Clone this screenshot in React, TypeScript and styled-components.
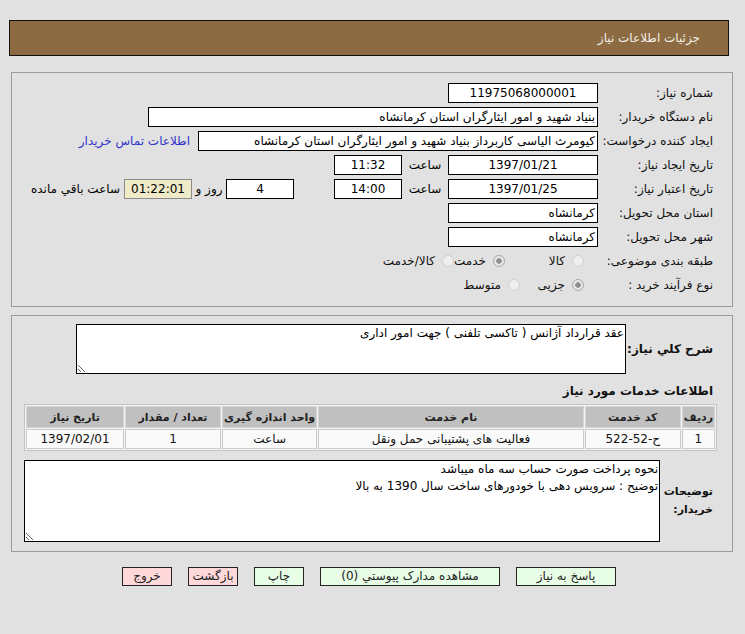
import styled, { createGlobalStyle } from "styled-components";

const GlobalStyle = createGlobalStyle`
  body {
    margin: 0;
    background: #e1e1e1;
    font-family: "DejaVu Sans", sans-serif;
    font-size: 12px;
    color: #000;
    direction: rtl;
  }
`;

const Page = styled.div`
  width: 745px;
  padding-top: 20px;
  direction: rtl;
`;

const TitleBar = styled.div`
  box-sizing: border-box;
  width: 720px;
  height: 36px;
  margin-right: 16px;
  background: #8c6b42;
  border: 1px solid #111;
  color: #f4efe6;
  font-size: 12px;
  display: flex;
  align-items: center;
  padding-right: 28px;
`;

const Panel = styled.div<{ $gap?: number }>`
  box-sizing: border-box;
  width: 722px;
  margin-right: 12px;
  margin-top: ${(p) => p.$gap ?? 8}px;
  border: 1px solid #9a9a9a;
  background: #e1e1e1;
`;

const FormGrid = styled.div`
  display: grid;
  grid-template-columns: 113px 1fr;
  column-gap: 2px;
  row-gap: 4px;
  padding: 10px 19px 11px 10px;
`;

const Label = styled.div`
  height: 20px;
  line-height: 20px;
  white-space: nowrap;
  font-size: 12px;
  color: #111;
`;

const Line = styled.div`
  display: flex;
  align-items: center;
  height: 20px;
`;

const Field = styled.div<{ $width: number; $center?: boolean; $bg?: string }>`
  box-sizing: border-box;
  width: ${(p) => p.$width}px;
  height: 20px;
  line-height: 18px;
  border: 1px solid ${(p) => (p.$bg ? "#8a8a8a" : "#000")};
  background: ${(p) => p.$bg ?? "#fff"};
  padding: 0 2px;
  text-align: ${(p) => (p.$center ? "center" : "right")};
  white-space: nowrap;
  overflow: hidden;
  font-size: 12px;
  flex: none;
`;

const Note = styled.span<{ $width?: number; $gap?: number }>`
  ${(p) => (p.$width ? `width: ${p.$width}px; text-align: center;` : "")}
  margin-right: ${(p) => p.$gap ?? 0}px;
  white-space: nowrap;
  flex: none;
  font-size: 12px;
`;

const Link = styled.a`
  margin-right: 8px;
  color: #3333cc;
  text-decoration: none;
  white-space: nowrap;
  font-size: 12px;
`;

const RadioGroup = styled.div`
  display: flex;
  align-items: center;
  height: 20px;
  padding-right: 14px;
`;

const RadioOption = styled.label<{ $width?: number }>`
  display: flex;
  align-items: center;
  gap: 7px;
  ${(p) => (p.$width ? `width: ${p.$width}px;` : "")}
  flex: none;
  color: #111;
  font-size: 12px;
`;

const RadioDot = styled.span<{ $on?: boolean }>`
  box-sizing: border-box;
  width: 12px;
  height: 12px;
  border-radius: 50%;
  border: 1px solid ${(p) => (p.$on ? "#a8a8a8" : "#cfcfcf")};
  background: ${(p) =>
    p.$on
      ? "radial-gradient(circle, #8f8f8f 0 2.5px, #e6e6e6 3px)"
      : "#eeeeee"};
`;

const Section = styled.div`
  padding: 8px 15px 9px 12px;
  display: flex;
  flex-direction: column;
`;

const TextRow = styled.div<{ $top?: number }>`
  display: flex;
  align-items: center;
  margin-top: ${(p) => p.$top ?? 0}px;
`;

const SideLabel = styled.div<{ $width: number; $wrap?: boolean; $size?: number }>`
  box-sizing: border-box;
  width: ${(p) => p.$width}px;
  padding-right: 4px;
  font-weight: bold;
  font-size: ${(p) => p.$size ?? 12}px;
  line-height: 18px;
  color: #111;
  white-space: ${(p) => (p.$wrap ? "normal" : "nowrap")};
  flex: none;
`;

const Memo = styled.textarea<{ $width?: number; $height: number }>`
  box-sizing: border-box;
  ${(p) => (p.$width ? `width: ${p.$width}px; flex: none;` : "flex: 1;")}
  height: ${(p) => p.$height}px;
  border: 1px solid #000;
  background: #fff;
  font-family: "DejaVu Sans", sans-serif;
  font-size: 12px;
  line-height: 17px;
  padding: 0 1px;
  margin: 0;
  direction: rtl;
  outline: none;
  resize: both;
`;

const Heading = styled.div`
  margin: 9px 4px 5px 0;
  font-weight: bold;
  font-size: 12px;
  line-height: 16px;
  color: #111;
`;

const Table = styled.table`
  width: 100%;
  border: 1px solid #c4c4c4;
  border-collapse: separate;
  border-spacing: 1px;
  background: #f2f2f2;
`;

const HeadCell = styled.th<{ $width?: number }>`
  ${(p) => (p.$width ? `width: ${p.$width}px;` : "")}
  height: 20px;
  background: #c0c0c0;
  border: 1px solid #d6d6d6;
  font-size: 11px;
  font-weight: bold;
  color: #222;
  text-align: center;
  white-space: nowrap;
  padding: 0 1px;
`;

const Cell = styled.td`
  height: 18px;
  padding: 0 1px;
  background: #fafafa;
  border: 1px solid #cccccc;
  text-align: center;
  font-size: 12px;
  color: #111;
`;

const Buttons = styled.div`
  width: 722px;
  margin: 15px 12px 0 0;
  display: flex;
  justify-content: center;
  gap: 16px;
  padding-right: 6px;
  box-sizing: border-box;
`;

const Button = styled.button<{ $width: number; $tone: "ok" | "back" }>`
  box-sizing: border-box;
  width: ${(p) => p.$width}px;
  height: 19px;
  padding: 0;
  border: 1px solid #222;
  background: ${(p) => (p.$tone === "ok" ? "#e8fde6" : "#ffd9d9")};
  font-family: "DejaVu Sans", sans-serif;
  font-size: 12px;
  color: #222;
  line-height: 17px;
`;

const rows = [
  {
    code: "ح-52-522",
    name: "فعالیت های پشتیبانی حمل ونقل",
    unit: "ساعت",
    qty: "1",
    date: "1397/02/01",
  },
];

export default function App() {
  return (
    <Page>
      <GlobalStyle />
      <TitleBar>جزئیات اطلاعات نیاز</TitleBar>

      <Panel $gap={16}>
        <FormGrid>
          <Label>شماره نیاز:</Label>
          <Line>
            <Field $width={150} $center>
              11975068000001
            </Field>
          </Line>

          <Label>نام دستگاه خریدار:</Label>
          <Line>
            <Field $width={450}>بنیاد شهید و امور ایثارگران استان کرمانشاه</Field>
          </Line>

          <Label>ایجاد کننده درخواست:</Label>
          <Line>
            <Field $width={400}>
              کیومرث الیاسی کاربرداز بنیاد شهید و امور ایثارگران استان کرمانشاه
            </Field>
            <Link href="#">اطلاعات تماس خریدار</Link>
          </Line>

          <Label>تاریخ ایجاد نیاز:</Label>
          <Line>
            <Field $width={150} $center>
              1397/01/21
            </Field>
            <Note $width={46}>ساعت</Note>
            <Field $width={68} $center>
              11:32
            </Field>
          </Line>

          <Label>تاریخ اعتبار نیاز:</Label>
          <Line>
            <Field $width={150} $center>
              1397/01/25
            </Field>
            <Note $width={46}>ساعت</Note>
            <Field $width={68} $center>
              14:00
            </Field>
            <Note $width={40} />
            <Field $width={68} $center>
              4
            </Field>
            <Note $width={34}>روز و</Note>
            <Field $width={68} $center $bg="#efebc9">
              01:22:01
            </Field>
            <Note $gap={4}>ساعت باقي مانده</Note>
          </Line>

          <Label>استان محل تحویل:</Label>
          <Line>
            <Field $width={150}>کرمانشاه</Field>
          </Line>

          <Label>شهر محل تحویل:</Label>
          <Line>
            <Field $width={150}>کرمانشاه</Field>
          </Line>

          <Label>طبقه بندی موضوعی:</Label>
          <RadioGroup>
            <RadioOption $width={79}>
              <RadioDot />
              کالا
            </RadioOption>
            <RadioOption $width={51}>
              <RadioDot $on />
              خدمت
            </RadioOption>
            <RadioOption>
              <RadioDot />
              کالا/خدمت
            </RadioOption>
          </RadioGroup>

          <Label>نوع فرآیند خرید :</Label>
          <RadioGroup>
            <RadioOption $width={64}>
              <RadioDot $on />
              جزیی
            </RadioOption>
            <RadioOption>
              <RadioDot />
              متوسط
            </RadioOption>
          </RadioGroup>
        </FormGrid>
      </Panel>

      <Panel>
        <Section>
          <TextRow>
            <SideLabel $width={91}>شرح کلي نیاز:</SideLabel>
            <Memo
              $width={550}
              $height={50}
              readOnly
              value="عقد قرارداد آژانس ( تاکسی تلفنی ) جهت امور اداری"
            />
          </TextRow>

          <Heading>اطلاعات خدمات مورد نیاز</Heading>

          <Table>
            <thead>
              <tr>
                <HeadCell $width={28}>ردیف</HeadCell>
                <HeadCell $width={92}>کد خدمت</HeadCell>
                <HeadCell>نام خدمت</HeadCell>
                <HeadCell $width={91}>واحد اندازه گیری</HeadCell>
                <HeadCell $width={92}>تعداد / مقدار</HeadCell>
                <HeadCell $width={94}>تاریخ نیاز</HeadCell>
              </tr>
            </thead>
            <tbody>
              {rows.map((r, i) => (
                <tr key={r.code}>
                  <Cell>{i + 1}</Cell>
                  <Cell>{r.code}</Cell>
                  <Cell>{r.name}</Cell>
                  <Cell>{r.unit}</Cell>
                  <Cell>{r.qty}</Cell>
                  <Cell>{r.date}</Cell>
                </tr>
              ))}
            </tbody>
          </Table>

          <TextRow $top={9}>
            <SideLabel $width={57} $size={11} $wrap>
              توضیحات خریدار:
            </SideLabel>
            <Memo
              $height={82}
              readOnly
              value={
                "نحوه پرداخت صورت حساب سه ماه میباشد\nتوضیح : سرویس دهی با خودورهای ساخت سال 1390 به بالا"
              }
            />
          </TextRow>
        </Section>
      </Panel>

      <Buttons>
        <Button $width={100} $tone="ok">
          پاسخ به نیاز
        </Button>
        <Button $width={180} $tone="ok">
          مشاهده مدارک پیوستي (0)
        </Button>
        <Button $width={50} $tone="ok">
          چاپ
        </Button>
        <Button $width={50} $tone="back">
          بازگشت
        </Button>
        <Button $width={50} $tone="back">
          خروج
        </Button>
      </Buttons>
    </Page>
  );
}
